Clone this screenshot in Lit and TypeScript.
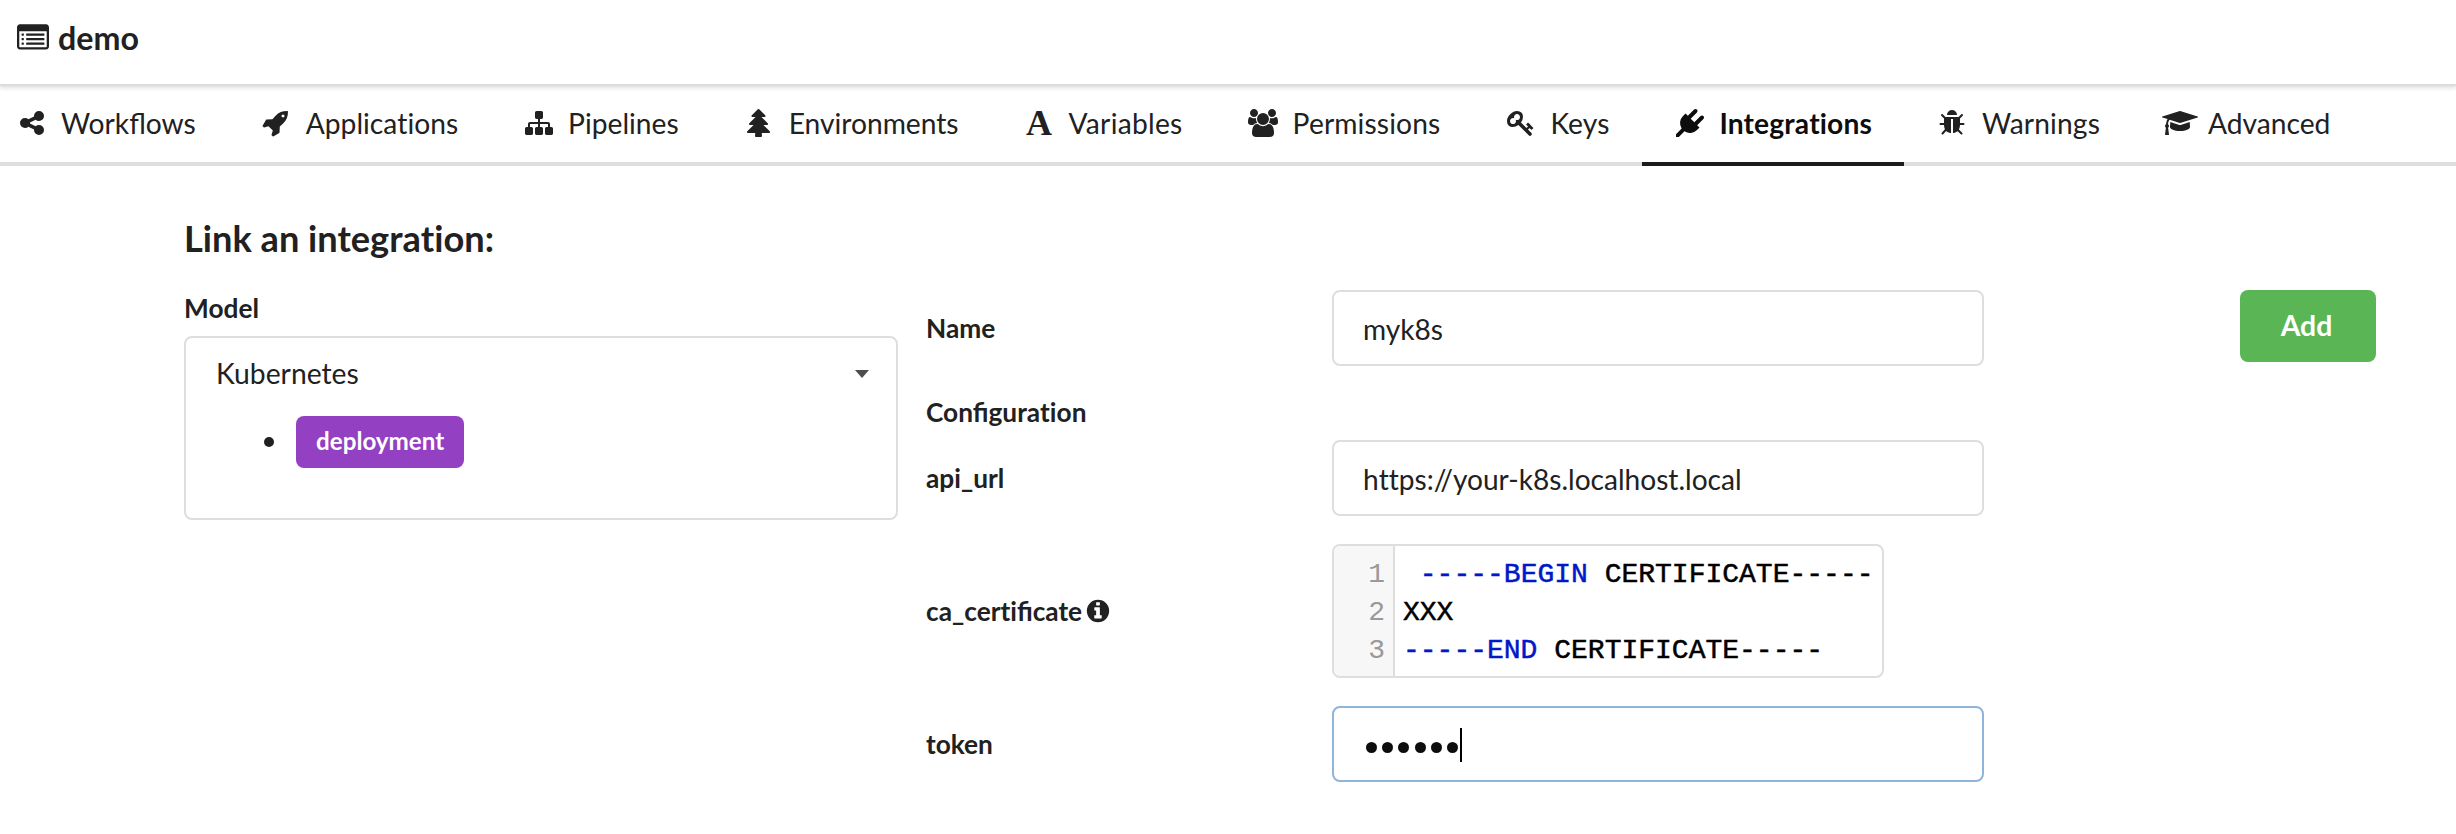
import { LitElement, html, css, svg, nothing } from "lit";
import { customElement, property } from "lit/decorators.js";

type Glyph = { w: number; d: string };

const row = (x: number, y: number, w: number) =>
  `M${x + 32} ${y}h${w - 64}q13 0 22.5 9.5t9.5 22.5v64q0 13-9.5 22.5t-22.5 9.5h-${w - 64}q-13 0-22.5-9.5t-9.5-22.5v-64q0-13 9.5-22.5t22.5-9.5z`;

const GLYPHS: Record<string, Glyph> = {
  list: {
    w: 1792,
    d:
      [672, 928, 1184].map((y) => row(256, y - 32, 128) + row(512, y - 32, 1024)).join("") +
      "M1664 1376v-832q0-13-9.5-22.5t-22.5-9.5h-1472q-13 0-22.5 9.5t-9.5 22.5v832q0 13 9.5 22.500t22.500 9.500h1472q13 0 22.500-9.500t9.500-22.500zM1792 288v1088q0 66-47 113t-113 47h-1472q-66 0-113-47t-47-113v-1088q0-66 47-113t113-47h1472q66 0 113 47t47 113z",
  },
  share: {
    w: 1792,
    d: "M1344 1024q133 0 226.500 93.500t93.500 226.500-93.500 226.500-226.500 93.500-226.500-93.500-93.500-226.500q0-12 2-34l-360-180q-92 86-218 86-133 0-226.500-93.500t-93.500-226.500 93.500-226.500 226.500-93.500q126 0 218 86l360-180q-2-22-2-34 0-133 93.500-226.500t226.500-93.500 226.500 93.500 93.500 226.500-93.500 226.500-226.500 93.500q-126 0-218-86l-360 180q2 22 2 34t-2 34l360 180q92-86 218-86z",
  },
  rocket: {
    w: 1792,
    d: "M1440 448q0-40-28-68t-68-28-68 28-28 68 28 68 68 28 68-28 28-68zm224-288q0 249-75.500 430.500t-253.500 360.500q-81 80-195 176l-20 379q-2 16-16 26l-384 224q-7 4-16 4-12 0-23-9l-64-64q-13-14-8-32l85-276-281-281-276 85q-3 1-9 1-14 0-23-9l-64-64q-17-19-5-39l224-384q10-14 26-16l379-20q96-114 176-195 188-187 358-258t431-71q14 0 24 9.500t10 22.500z",
  },
  sitemap: {
    w: 1792,
    d: "M1792 1248v320q0 40-28 68t-68 28h-320q-40 0-68-28t-28-68v-320q0-40 28-68t68-28h96v-192h-512v192h96q40 0 68 28t28 68v320q0 40-28 68t-68 28h-320q-40 0-68-28t-28-68v-320q0-40 28-68t68-28h96v-192h-512v192h96q40 0 68 28t28 68v320q0 40-28 68t-68 28h-320q-40 0-68-28t-28-68v-320q0-40 28-68t68-28h96v-192q0-52 38-90t90-38h512v-192h-96q-40 0-68-28t-28-68v-320q0-40 28-68t68-28h320q40 0 68 28t28 68v320q0 40-28 68t-68 28h-96v192h512q52 0 90 38t38 90v192h96q40 0 68 28t28 68z",
  },
  tree: {
    w: 1792,
    d: "M1600 1472q0 26-19 45t-45 19h-462q1 17 6 87.500t5 108.500q0 25-18 42.500t-43 17.500h-320q-25 0-43-17.500t-18-42.500q0-38 5-108.500t6-87.500h-462q-26 0-45-19t-19-45 19-45l402-403h-229q-26 0-45-19t-19-45 19-45l402-403h-197q-26 0-45-19t-19-45 19-45l384-384q19-19 45-19t45 19l384 384q19 19 19 45t-19 45-45 19h-197l402 403q19 19 19 45t-19 45-45 19h-229l402 403q19 19 19 45z",
  },
  users: {
    w: 1920,
    d: "M593 896q-162 5-265 128h-134q-82 0-138-40.500t-56-118.500q0-353 124-353 6 0 43.500 21t97.500 42.500 119 21.500q67 0 133-23-5 37-5 66 0 139 81 256zm1071 637q0 120-73 189.500t-194 69.500h-874q-121 0-194-69.500t-73-189.500q0-53 3.500-103.500t14-109 26.500-108.500 43-97.500 62-81 85.500-53.500 111.500-20q10 0 43 21.500t73 48 107 48 135 21.500 135-21.500 107-48 73-48 43-21.500q61 0 111.500 20t85.500 53.500 62 81 43 97.500 26.500 108.500 14 109 3.500 103.500zm-1024-1277q0 106-75 181t-181 75-181-75-75-181 75-181 181-75 181 75 75 181zm704 384q0 159-112.500 271.500t-271.500 112.500-271.500-112.500-112.500-271.500 112.500-271.500 271.500-112.500 271.500 112.500 112.500 271.500zm576 225q0 78-56 118.500t-138 40.500h-134q-103-123-265-128 81-117 81-256 0-29-5-66 66 23 133 23 59 0 119-21.500t97.500-42.500 43.500-21q124 0 124 353zm-128-609q0 106-75 181t-181 75-181-75-75-181 75-181 181-75 181 75 75 181z",
  },
  key: {
    w: 1792,
    d: "M832 512q0-80-56-136t-136-56-136 56-56 136q0 42 19 83-41-19-83-19-80 0-136 56t-56 136 56 136 136 56 136-56 56-136q0-42-19-83 41 19 83 19 80 0 136-56t56-136zm851 704q0 17-49 66t-66 49q-9 0-28.500-16t-36.500-33-38.500-40-24.500-26l-96 96 220 220q28 28 28 68 0 42-39 81t-81 39q-40 0-68-28l-671-671q-176 131-365 131-163 0-265.500-102.500t-102.500-265.500q0-160 95-313t248-248 313-95q163 0 265.500 102.500t102.500 265.500q0 189-131 365l355 355 96-96q-3-3-26-24.500t-40-38.500-33-36.500-16-28.500q0-17 49-66t66-49q13 0 23 10 6 6 46 44.500t82 79.500 86.500 86 73 78 28.500 41z",
  },
  plug: {
    w: 1792,
    d: "M1755 453q37 38 37 90.500t-37 90.500l-401 400 150 150-160 160q-163 163-389.500 186.500t-411.500-100.500l-362 362h-181v-181l362-362q-124-185-100.500-411.500t186.500-389.500l160-160 150 150 400-401q38-37 91-37t90 37 37 90.500-37 90.500l-400 401 234 234 401-400q38-37 91-37t90 37z",
  },
  bug: {
    w: 1792,
    d: "M1696 960q0 26-19 45t-45 19h-224q0 171-67 290l208 209q19 19 19 45t-19 45q-18 19-45 19t-45-19l-198-197q-5 5-15 13t-42 28.500-65 36.500-82 29-97 13v-896h-128v896q-51 0-101.500-13.500t-87-33-66-39-43.500-32.500l-15-14-183 207q-20 21-48 21-24 0-43-16-19-18-20.500-44.500t15.500-46.500l202-227q-58-114-58-274h-224q-26 0-45-19t-19-45 19-45 45-19h224v-294l-173-173q-19-19-19-45t19-45 45-19 45 19l173 173h844l173-173q19-19 45-19t45 19 19 45-19 45l-173 173v294h224q26 0 45 19t19 45zm-480-576h-640q0-133 93.500-226.500t226.500-93.500 226.500 93.500 93.500 226.500z",
  },
  graduation: {
    w: 2304,
    d: "M1774 836l18 316q4 69-82 128t-235 93.500-323 34.500-323-34.500-235-93.500-82-128l18-316 574 181q22 7 48 7t48-7zm530-324q0 23-22 31l-1120 352q-4 1-10 1t-10-1l-652-206q-43 34-71 111.500t-34 178.500q63 36 63 109 0 69-58 107l58 433q2 14-8 25-9 11-24 11h-192q-15 0-24-11-10-11-8-25l58-433q-58-38-58-107 0-73 65-111 11-207 98-330l-333-104q-22-8-22-31t22-31l1120-352q4-1 10-1t10 1l1120 352q22 8 22 31z",
  },
  info: {
    w: 1792,
    d: "M1152 1376v-160q0-14-9-23t-23-9h-96v-512q0-14-9-23t-23-9h-320q-14 0-23 9t-9 23v160q0 14 9 23t23 9h96v320h-96q-14 0-23 9t-9 23v160q0 14 9 23t23 9h448q14 0 23-9t9-23zM1024 480v-160q0-14-9-23t-23-9h-192q-14 0-23 9t-9 23v160q0 14 9 23t23 9h192q14 0 23-9t9-23zM1664 896a768 768 0 1 1-1536 0a768 768 0 1 1 1536 0z",
  },
};

// Lato joins "ti" and "tt"; these pairs are set apart while fi and fl stay joined.
const text = (s: string) =>
  s.split(/(ti|tt)/).map((p) => (p === "ti" || p === "tt" ? html`<span class="nolig">${p}</span>` : p));

@customElement("ui-icon")
export class UiIcon extends LitElement {
  @property() name = "";
  @property({ type: Number }) size = 28;

  static styles = css`
    :host {
      display: inline-flex;
      align-items: center;
      justify-content: center;
      flex: none;
    }
    svg {
      display: block;
      flex: none;
      fill: currentColor;
    }
    .letter {
      font: bold 36px/28px "Liberation Serif", serif;
      letter-spacing: 0;
    }
  `;

  render() {
    if (this.name === "font") return html`<span class="letter">A</span>`;
    const g = GLYPHS[this.name];
    if (!g) return nothing;
    return html`<svg
      width=${(g.w / 1792) * this.size}
      height=${this.size}
      viewBox="0 0 ${g.w} 1792"
    >
      ${svg`<path fill-rule="evenodd" d=${g.d}></path>`}
    </svg>`;
  }
}

const TABS = [
  { icon: "share", label: "Workflows" },
  { icon: "rocket", label: "Applications" },
  { icon: "sitemap", label: "Pipelines" },
  { icon: "tree", label: "Environments" },
  { icon: "font", label: "Variables", cls: "wide" },
  { icon: "users", label: "Permissions", cls: "roomy" },
  { icon: "key", label: "Keys", cls: "roomy" },
  { icon: "plug", label: "Integrations", cls: "active" },
  { icon: "bug", label: "Warnings", cls: "roomy" },
  { icon: "graduation", label: "Advanced" },
];

@customElement("app-root")
export class AppRoot extends LitElement {
  static styles = css`
    :host {
      display: block;
      box-sizing: border-box;
      height: 834px;
      overflow: hidden;
      background: #fff;
      color: #212121;
      font: 28px/40px Lato, sans-serif;
    }
    * {
      box-sizing: border-box;
    }
    .nolig {
      font-variant-ligatures: none;
    }
    .top {
      display: flex;
      align-items: center;
      gap: 9px;
      height: 86px;
      padding: 0 17px 8px;
      border-bottom: 2px solid #dcdcdc;
      box-shadow: 0 2px 4px rgba(34, 36, 38, 0.15);
      font-size: 32.2px;
      font-weight: 700;
    }
    .tabs {
      display: flex;
      height: 80px;
      border-bottom: 4px solid #dedede;
      font-size: 28.2px;
    }
    .tab {
      display: flex;
      align-items: center;
      gap: 13px;
      height: 80px;
      padding: 0 32px 2px;
      border-bottom: 4px solid transparent;
    }
    .tab:first-child {
      margin-left: -17px;
    }
    .tab:last-child {
      gap: 11px;
    }
    .tab ui-icon {
      width: 33px;
    }
    .wide {
      letter-spacing: 0.27px;
    }
    .roomy {
      letter-spacing: 0.13px;
    }
    .active {
      color: #0d0d0d;
      border-color: #1b1c1d;
      font-weight: 700;
      letter-spacing: 0.13px;
    }
    .page {
      padding: 49px 80px 0 184px;
    }
    h3 {
      margin: 0;
      font-size: 36.2px;
      line-height: 46px;
      font-weight: 700;
    }
    .columns {
      display: grid;
      grid-template-columns: 714px 1058px 1fr;
      column-gap: 28px;
      padding-top: 29px;
    }
    .label {
      font-size: 26.25px;
      line-height: 36px;
      font-weight: 700;
    }
    .picker {
      height: 184px;
      margin-top: 10px;
      padding: 15px 27px 0 30px;
      border: 2px solid #dedede;
      border-radius: 8px;
    }
    .choice {
      display: flex;
      align-items: center;
      justify-content: space-between;
      height: 40px;
      font-size: 28.3px;
    }
    .choice span {
      margin-top: -1px;
    }
    .caret {
      margin-top: 2px;
      fill: #4d4d4d;
    }
    .features {
      display: flex;
      align-items: center;
      gap: 22px;
      margin: 23px 0 0 48px;
    }
    .features::before {
      content: "";
      width: 10px;
      height: 10px;
      border-radius: 50%;
      background: #212121;
    }
    .tag {
      height: 52px;
      padding: 0 20px;
      border-radius: 8px;
      background: #9340c2;
      color: #fff;
      font-size: 24.2px;
      line-height: 50px;
      font-weight: 700;
    }
    .form {
      display: grid;
      grid-template-columns: 406px 652px;
      grid-template-rows: 76px 74px 76px 28px 134px 28px 76px;
      align-items: center;
    }
    .form .label {
      grid-column: 1;
      display: flex;
      align-items: center;
      gap: 3px;
    }
    .r1 {
      grid-row: 1;
    }
    .r2 {
      grid-row: 2;
      padding-top: 18px;
    }
    .r3 {
      grid-row: 3;
    }
    .r5 {
      grid-row: 5;
    }
    .r7 {
      grid-row: 7;
    }
    .input {
      grid-column: 2;
      display: flex;
      align-items: center;
      height: 76px;
      padding: 2px 28px 0 29px;
      border: 2px solid #dedede;
      border-radius: 8px;
      font-size: 28.1px;
    }
    .focus {
      border-color: #8fb5da;
    }
    .dots {
      display: flex;
      gap: 5.2px;
      padding: 4px 2px 0 3px;
    }
    .dot {
      width: 11px;
      height: 11px;
      border-radius: 50%;
      background: #0d0d0d;
    }
    .cursor {
      width: 2px;
      height: 34px;
      background: #000;
    }
    .code {
      grid-column: 2;
      display: grid;
      grid-template-columns: 61px 1fr;
      width: 552px;
      height: 134px;
      border: 2px solid #dedede;
      border-radius: 8px;
      overflow: hidden;
      font: 28px/38px "Liberation Mono", monospace;
      color: #000;
    }
    .gutter {
      padding: 10px 8px 0 0;
      border-right: 2px solid #dedede;
      background: #f7f7f7;
      color: #999;
      text-align: right;
    }
    .lines {
      padding: 10px 0 0 8px;
      white-space: pre;
      -webkit-text-stroke: 0.5px;
    }
    .kw {
      color: #0018c8;
    }
    .add {
      justify-self: end;
      width: 136px;
      height: 72px;
      border: 0;
      border-radius: 8px;
      background: #5ab655;
      color: #fff;
      font: 700 28.4px/70px Lato, sans-serif;
      padding: 0 3px 2px 0;
    }
  `;

  render() {
    return html`
      <header class="top"><ui-icon name="list" size="32"></ui-icon><span>demo</span></header>
      <nav class="tabs">
        ${TABS.map(
          (t) => html`<a class="tab ${t.cls ?? ""}"
            ><ui-icon name=${t.icon}></ui-icon><span>${text(t.label)}</span></a
          >`,
        )}
      </nav>
      <main class="page">
        <h3>${text("Link an integration:")}</h3>
        <div class="columns">
          <section class="model">
            <div class="label">Model</div>
            <div class="picker">
              <div class="choice">
                <span>Kubernetes</span>
                <svg class="caret" width="14" height="8" viewBox="0 0 14 8">
                  <path d="M0 0h14l-7 8z"></path>
                </svg>
              </div>
              <div class="features"><span class="tag">deployment</span></div>
            </div>
          </section>
          <section class="form">
            <div class="label r1">Name</div>
            <div class="input r1">myk8s</div>
            <div class="label r2"><span>${text("Configuration")}</span></div>
            <div class="label r3">api_url</div>
            <div class="input r3"><span>${text("https://your-k8s.localhost.local")}</span></div>
            <div class="label r5">
              <span>${text("ca_certificate")}</span><ui-icon name="info" size="26"></ui-icon>
            </div>
            <div class="code r5">
              <div class="gutter">1<br />2<br />3</div>
              <div class="lines"
                ><div> <span class="kw">-----BEGIN</span> CERTIFICATE-----</div
                ><div>XXX</div
                ><div><span class="kw">-----END</span> CERTIFICATE-----</div
              ></div>
            </div>
            <div class="label r7">token</div>
            <div class="input focus r7">
              <div class="dots">${[0, 1, 2, 3, 4, 5].map(() => html`<i class="dot"></i>`)}</div>
              <div class="cursor"></div>
            </div>
          </section>
          <button class="add">Add</button>
        </div>
      </main>
    `;
  }
}
